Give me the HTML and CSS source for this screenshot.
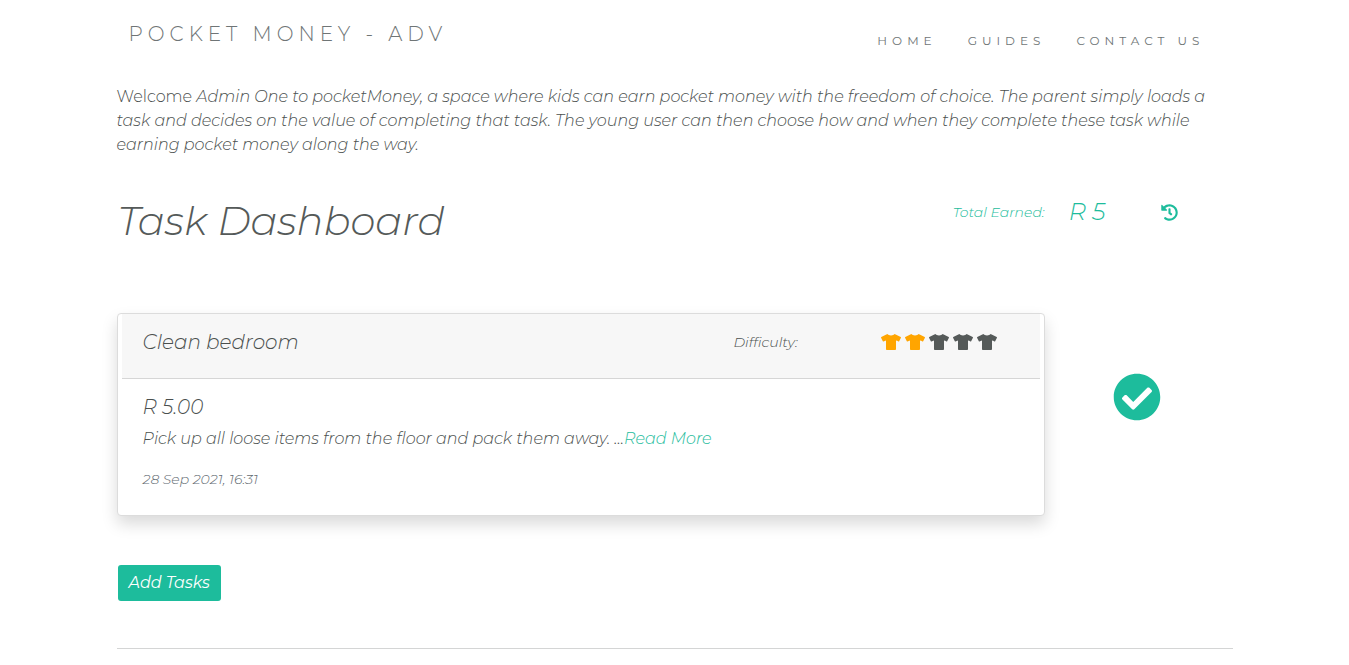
FILE: index.html
```html
<!DOCTYPE html>
<html lang="en">
<head>
<meta charset="utf-8">
<meta name="viewport" content="width=device-width, initial-scale=1">
<title>Pocket Money - Adv</title>
<link rel="stylesheet" href="styles.css">
</head>
<body>
<svg class="sprite" aria-hidden="true">
  <symbol id="shirt" viewBox="0 0 640 512"><path d="M631.2 96.5L436.5 0C416.400 27.800 371.900 47.200 320 47.200S223.600 27.800 203.500 0L8.800 96.500c-7.900 4-11.100 13.600-7.200 21.500l57.200 114.500c4 7.900 13.600 11.100 21.500 7.200l56.600-27.700c10.600-5.200 23 2.500 23 14.400V480c0 17.700 14.300 32 32 32h256c17.700 0 32-14.300 32-32V226.300c0-11.800 12.400-19.600 23-14.400l56.600 27.700c7.900 4 17.500.8 21.500-7.200L638.300 118c4-7.900.8-17.600-7.100-21.500z"/></symbol>
</svg>
<div class="container">
  <header class="navbar">
    <a class="brand" href="#">POCKET MONEY - ADV</a>
    <nav class="links">
      <a href="#">HOME</a>
      <a href="#">GUIDES</a>
      <a href="#">CONTACT US</a>
    </nav>
  </header>
  <main>
    <p class="intro">Welcome <em>Admin One to pocketMoney, a space where kids can earn pocket money with the freedom of choice. The parent simply loads a task and decides on the value of completing that task. The young user can then choose how and when they complete these task while earning pocket money along the way.</em></p>
    <section class="heading">
      <h1>Task Dashboard</h1>
      <div class="earned">
        <span class="earned-label">Total Earned:</span>
        <span class="earned-value">R 5</span>
        <a class="history" href="#" aria-label="History">
          <svg viewBox="0 0 512 512"><path d="M504 255.531c.253 136.640-111.180 248.372-247.820 248.468-59.015.042-113.223-20.530-155.822-54.911-11.077-8.940-11.905-25.541-1.839-35.607l11.267-11.267c8.609-8.609 22.353-9.551 31.891-1.984C173.062 425.135 212.781 440 256 440c101.705 0 184-82.311 184-184 0-101.705-82.311-184-184-184-48.814 0-93.149 18.969-126.068 49.932l50.754 50.754c10.080 10.080 2.941 27.314-11.313 27.314H24c-8.837 0-16-7.163-16-16V38.627c0-14.254 17.234-21.393 27.314-11.314l49.372 49.372C129.209 34.136 189.552 8 256 8c136.810 0 247.747 110.780 248 247.531zm-180.912 78.784l9.823-12.630c8.138-10.463 6.253-25.542-4.210-33.679L288 256.349V152c0-13.255-10.745-24-24-24h-16c-13.255 0-24 10.745-24 24v135.651l65.409 50.874c10.463 8.137 25.541 6.253 33.679-4.210z"/></svg>
        </a>
      </div>
    </section>
    <section class="task">
      <article class="card">
        <div class="card-header">
          <h2>Clean bedroom</h2>
          <span class="difficulty">Difficulty:</span>
          <div class="shirts" role="img" aria-label="2 out of 5">
            <svg class="on"><use href="#shirt"/></svg>
            <svg class="on"><use href="#shirt"/></svg>
            <svg><use href="#shirt"/></svg>
            <svg><use href="#shirt"/></svg>
            <svg><use href="#shirt"/></svg>
          </div>
        </div>
        <div class="card-body">
          <h3>R 5.00</h3>
          <p class="desc">Pick up all loose items from the floor and pack them away. ...<a href="#">Read More</a></p>
          <p class="date">28 Sep 2021, 16:31</p>
        </div>
      </article>
      <a class="complete" href="#" aria-label="Complete task">
        <svg viewBox="0 0 512 512"><path d="M504 256c0 136.967-111.033 248-248 248S8 392.967 8 256 119.033 8 256 8s248 111.033 248 248zM227.314 387.314l184-184c6.248-6.248 6.248-16.379 0-22.627l-22.627-22.627c-6.248-6.249-16.379-6.249-22.628 0L216 308.118l-70.059-70.059c-6.248-6.248-16.379-6.248-22.628 0l-22.627 22.627c-6.248 6.248-6.248 16.379 0 22.627l104 104c6.249 6.249 16.379 6.249 22.628.001z"/></svg>
      </a>
    </section>
    <button class="add" type="button">Add Tasks</button>
    <hr>
  </main>
</div>
</body>
</html>
```
FILE: styles.css
```css
* { box-sizing: border-box; }
body {
  margin: 0;
  background: #fff;
  color: #4a4f4e;
  font-family: Montserrat, Inter, "Open Sans", sans-serif;
  font-weight: 300;
  font-size: 16px;
  line-height: 24px;
}
h1, h2, h3, p { margin: 0; font-weight: 300; }
a { color: #1dbc9c; text-decoration: none; }
svg { display: block; fill: currentColor; }
.sprite { display: none; }
.container { max-width: 1140px; margin: 0 auto; padding: 0 12px; }
.navbar {
  display: flex;
  justify-content: space-between;
  align-items: flex-end;
  padding: 18px 28px 0 12px;
}
.navbar a { color: #6f7576; }
.brand { font-size: 20px; line-height: 32px; letter-spacing: 5px; }
.links { display: flex; gap: 31px; font-size: 12px; line-height: 18px; letter-spacing: 5px; font-weight: 400; }
.intro { margin-top: 35px; }
.heading {
  display: flex;
  justify-content: space-between;
  margin-top: 40px;
  padding-left: 1px;
  font-style: italic;
}
h1 { font-size: 40px; line-height: 48px; color: #555a59; }
.earned { display: flex; align-items: center; height: 30px; padding-right: 55px; color: #1dbc9c; }
.earned-label { font-size: 14px; }
.earned-value { font-size: 24px; margin-left: 24px; }
.history { margin-left: 55px; }
.history svg { width: 17px; height: 17px; }
.task { display: grid; grid-template-columns: 1fr 188px; margin-top: 68px; font-style: italic; }
.card {
  border: 1px solid #dcdcdc;
  border-radius: 4px;
  padding: 0 4px;
  background: #fff;
  box-shadow: 0 8px 16px rgba(0, 0, 0, .15);
}
.card-header {
  display: grid;
  grid-template-columns: 1fr 147px 139px;
  align-items: center;
  padding: 16px 20px 24px 21px;
  background: #f7f7f7;
  border-bottom: 1px solid #d6d6d6;
}
h2, h3 { font-size: 20px; line-height: 24px; }
.difficulty { font-size: 14px; }
.shirts { display: flex; gap: 4px; }
.shirts svg { width: 20px; height: 16px; color: #555a59; }
.shirts .on { color: #ffa500; }
.card-body { padding: 16px 20px 24px 21px; }
.desc { margin-top: 8px; }
.date { margin-top: 16px; font-size: 14px; color: #636b72; }
.complete { place-self: center; padding: 0 4px 36px 0; }
.complete svg { width: 48px; height: 48px; }
.add {
  display: block;
  margin: 49px 0 0 1px;
  padding: 6px 11px;
  border: 0;
  border-radius: 3px;
  background: #1dbc9c;
  color: #fff;
  font: inherit;
  font-style: italic;
  font-weight: 400;
}
hr { margin: 47px 0 16px; border: 0; border-top: 1px solid #d4d5d5; }
```
